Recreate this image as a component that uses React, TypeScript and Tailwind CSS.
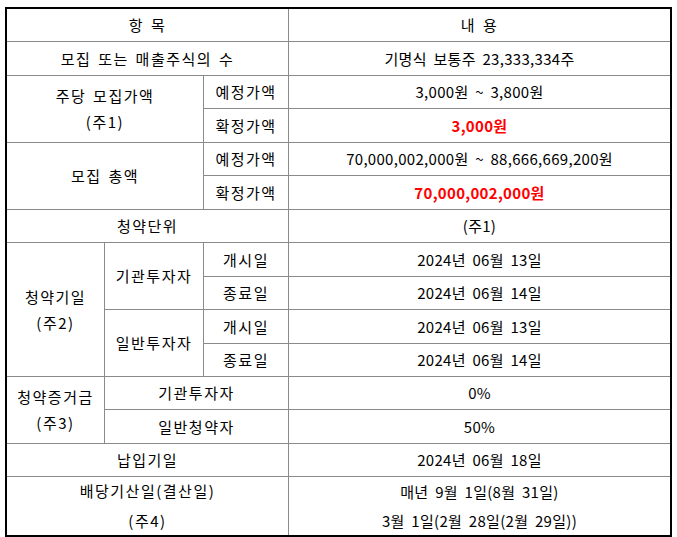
import type { ReactNode } from 'react';

function Cell({
  className = '',
  label = false,
  children,
}: {
  className?: string;
  label?: boolean;
  children: ReactNode;
}) {
  return (
    <div
      className={`flex flex-col items-center justify-center bg-white text-center ${
        label ? 'tracking-[1.5px] [word-spacing:2px]' : 'tracking-[0.3px] [word-spacing:3px]'
      } ${className}`}
    >
      {children}
    </div>
  );
}

export default function App() {
  return (
    <div
      className="min-h-[537px] bg-white pt-[7px] pl-[5px] text-[15px] leading-[26px] text-black"
      style={{ fontFamily: '"Noto Sans CJK KR", "Noto Sans", sans-serif' }}
    >
      <div className="w-[667px] border-2 border-black">
        <div className="grid grid-cols-[97px_98px_84px_381px] grid-rows-[32px_33px_32px_33px_32px_33px_32px_33px_32px_33px_32px_32px_33px_32px_58px] gap-px bg-[#8a8a8a]">
          {/* 헤더 */}
          <Cell label className="col-span-3 bg-[#d9d9d9]">항 목</Cell>
          <Cell label className="bg-[#d9d9d9]">내 용</Cell>

          <Cell label className="col-span-3">모집 또는 매출주식의 수</Cell>
          <Cell>기명식 보통주 23,333,334주</Cell>

          {/* 주당 모집가액 */}
          <Cell label className="col-span-2 row-span-2">
            <span>주당 모집가액</span>
            <span>(주1)</span>
          </Cell>
          <Cell label>예정가액</Cell>
          <Cell>3,000원 ~ 3,800원</Cell>
          <Cell label>확정가액</Cell>
          <Cell className="font-bold text-[#ff0000]">3,000원</Cell>

          {/* 모집 총액 */}
          <Cell label className="col-span-2 row-span-2">모집 총액</Cell>
          <Cell label>예정가액</Cell>
          <Cell>70,000,002,000원 ~ 88,666,669,200원</Cell>
          <Cell label>확정가액</Cell>
          <Cell className="font-bold text-[#ff0000]">70,000,002,000원</Cell>

          <Cell label className="col-span-3">청약단위</Cell>
          <Cell>(주1)</Cell>

          {/* 청약기일 */}
          <Cell label className="row-span-4">
            <span>청약기일</span>
            <span>(주2)</span>
          </Cell>
          <Cell label className="row-span-2">기관투자자</Cell>
          <Cell label>개시일</Cell>
          <Cell>2024년 06월 13일</Cell>
          <Cell label>종료일</Cell>
          <Cell>2024년 06월 14일</Cell>
          <Cell label className="row-span-2">일반투자자</Cell>
          <Cell label>개시일</Cell>
          <Cell>2024년 06월 13일</Cell>
          <Cell label>종료일</Cell>
          <Cell>2024년 06월 14일</Cell>

          {/* 청약증거금 */}
          <Cell label className="row-span-2">
            <span>청약증거금</span>
            <span>(주3)</span>
          </Cell>
          <Cell label className="col-span-2">기관투자자</Cell>
          <Cell>0%</Cell>
          <Cell label className="col-span-2">일반청약자</Cell>
          <Cell>50%</Cell>

          <Cell label className="col-span-3">납입기일</Cell>
          <Cell>2024년 06월 18일</Cell>

          <Cell label className="col-span-3 leading-[30px]">
            <span>배당기산일(결산일)</span>
            <span>(주4)</span>
          </Cell>
          <Cell className="leading-[29px]">
            <span>매년 9월 1일(8월 31일)</span>
            <span>3월 1일(2월 28일(2월 29일))</span>
          </Cell>
        </div>
      </div>
    </div>
  );
}
